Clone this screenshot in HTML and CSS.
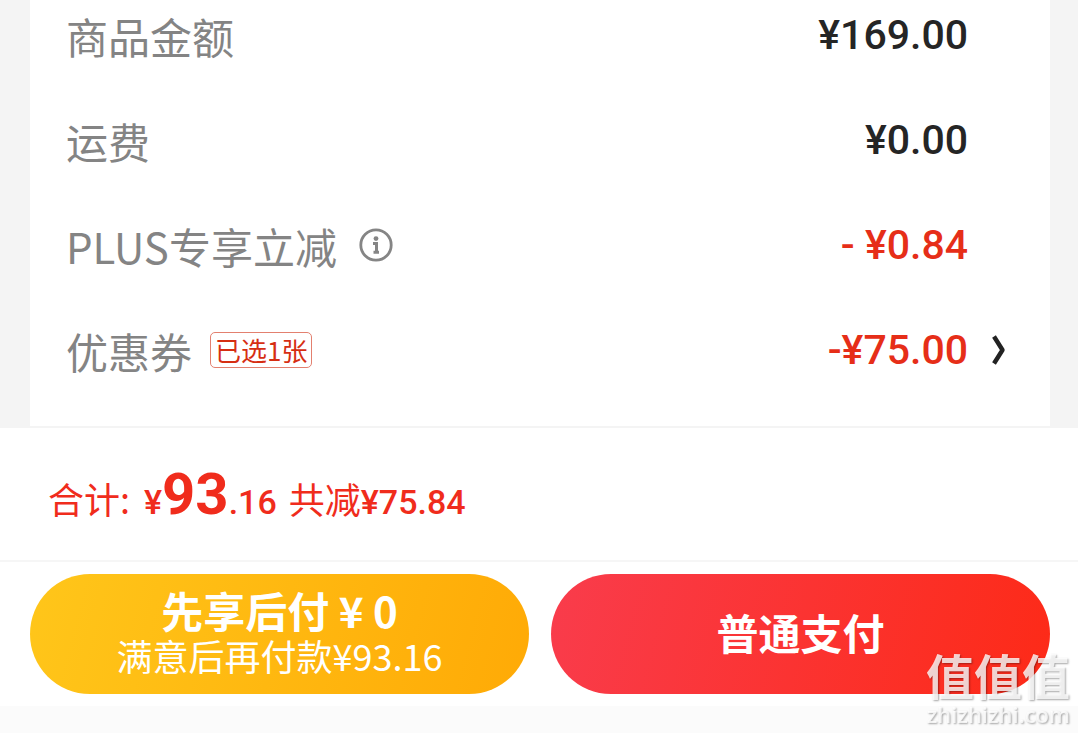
FILE: index.html
```html
<!DOCTYPE html>
<html lang="zh-CN">
<head>
    <meta charset="UTF-8">
    <meta name="viewport" content="width=device-width, initial-scale=1.0">
    <title>确认订单</title>
    <link rel="stylesheet" href="styles.css">
</head>
<body>
    <main class="order">
        <div class="card">
            <div class="row">
                <span class="label">商品金额</span>
                <span class="value">¥169.00</span>
            </div>
            <div class="row">
                <span class="label">运费</span>
                <span class="value">¥0.00</span>
            </div>
            <div class="row">
                <span class="label">PLUS专享立减</span>
                <button class="info-btn" type="button" aria-label="说明">
                    <svg width="34" height="34" viewBox="0 0 34 34" fill="none" stroke="#858585">
                        <circle cx="17" cy="17" r="15.2" stroke-width="2.8"/>
                        <circle cx="17" cy="10.6" r="2.4" fill="#858585" stroke="none"/>
                        <path d="M14 15.6h3.5v9M14.5 24.2h5.5" stroke-width="3"/>
                    </svg>
                </button>
                <span class="value minus">- ¥0.84</span>
            </div>
            <div class="row">
                <span class="label">优惠券</span>
                <span class="tag">已选1张</span>
                <span class="value minus">-¥75.00</span>
                <button class="arrow-btn" type="button" aria-label="选择优惠券">
                    <svg width="14" height="32" viewBox="0 0 14 32" fill="none" stroke="#222">
                        <path d="M2 2.5L10.5 16L2 29.5" stroke-width="4.4" stroke-linejoin="round"/>
                    </svg>
                </button>
            </div>
        </div>
    </main>

    <section class="total">
        <span class="total-label">合计:</span>
        <span class="total-price">¥<strong>93</strong>.16</span>
        <span class="total-label">共减<b>¥75.84</b></span>
    </section>

    <footer class="actions">
        <button class="pay-btn pay-later" type="button">
            <span class="pay-title">先享后付 ¥ 0</span>
            <span class="pay-sub">满意后再付款¥93.16</span>
        </button>
        <button class="pay-btn pay-now" type="button">
            <span class="pay-title">普通支付</span>
        </button>
    </footer>

    <div class="watermark">
        <span class="watermark-name">值值值</span>
        <span class="watermark-site">zhizhizhi.com</span>
    </div>
</body>
</html>
```
FILE: styles.css
```css
:root {
    --red: #e62e18;
    --gray: #848484;
    --cjk: "Noto Sans CJK SC", sans-serif;
    --number: Roboto, "Noto Sans CJK SC", sans-serif;
}

* {
    margin: 0;
    padding: 0;
    box-sizing: border-box;
}

body {
    background-color: #fbfbfb;
    font-family: var(--cjk);
}

button {
    border: none;
    background: none;
    font-family: inherit;
    cursor: pointer;
}

svg {
    display: block;
}

.order {
    padding: 0 28px 2px 30px;
    background-color: #f4f4f4;
}

.card {
    display: flex;
    flex-direction: column;
    gap: 41px;
    padding: 3px 44px 44px 36px;
    background-color: #fff;
}

.row {
    display: flex;
    align-items: center;
    height: 64px;
    padding-right: 38px;
}

.label {
    font-size: 42px;
    color: var(--gray);
}

.value {
    margin-left: auto;
    font-family: var(--number);
    font-size: 41px;
    font-weight: 500;
    color: #252525;
}

.minus {
    color: var(--red);
}

.info-btn {
    margin-left: 22px;
}

.tag {
    margin-left: 18px;
    padding: 0 4px;
    border: 1px solid #e3806f;
    border-radius: 5px;
    font-size: 26px;
    line-height: 34px;
    color: #d62e12;
}

.arrow-btn {
    width: 38px;
    margin-right: -38px;
    padding-left: 24px;
}

.total {
    display: flex;
    align-items: baseline;
    height: 132px;
    padding: 32px 48px 0;
    background-color: #fff;
    color: #f02c1c;
}

.total-label {
    font-size: 36px;
}

.total-label b,
.total-price {
    font-family: var(--number);
    font-weight: 500;
    font-size: 34px;
}

.total-price {
    margin: 0 12px 0 14px;
}

.total-price strong {
    font-size: 58px;
    font-weight: 700;
}

.actions {
    display: flex;
    gap: 22px;
    padding: 12px 28px 12px 30px;
    border-top: 2px solid #f6f6f6;
    background-color: #fff;
}

.pay-btn {
    display: flex;
    flex: 1;
    flex-direction: column;
    align-items: center;
    justify-content: center;
    height: 120px;
    padding-bottom: 4px;
    border-radius: 60px;
    color: #fff;
}

.pay-later {
    background: linear-gradient(105deg, #ffc61a, #ffaa06);
}

.pay-now {
    background: linear-gradient(105deg, #f93c4c, #fd2a17);
}

.pay-title {
    font-size: 42px;
    font-weight: 700;
    line-height: 46px;
}

.pay-sub {
    font-size: 36px;
    line-height: 44px;
}

.watermark {
    position: fixed;
    right: 8px;
    bottom: 6px;
    display: flex;
    flex-direction: column;
    align-items: flex-end;
    color: rgba(255, 255, 255, 0.8);
    text-shadow: 1px 1px 2px rgba(0, 0, 0, 0.35);
}

.watermark-name {
    font-size: 48px;
    font-weight: 700;
    line-height: 54px;
}

.watermark-site {
    font-family: "Open Sans", sans-serif;
    font-size: 22px;
    font-weight: 600;
    line-height: 26px;
}
```
